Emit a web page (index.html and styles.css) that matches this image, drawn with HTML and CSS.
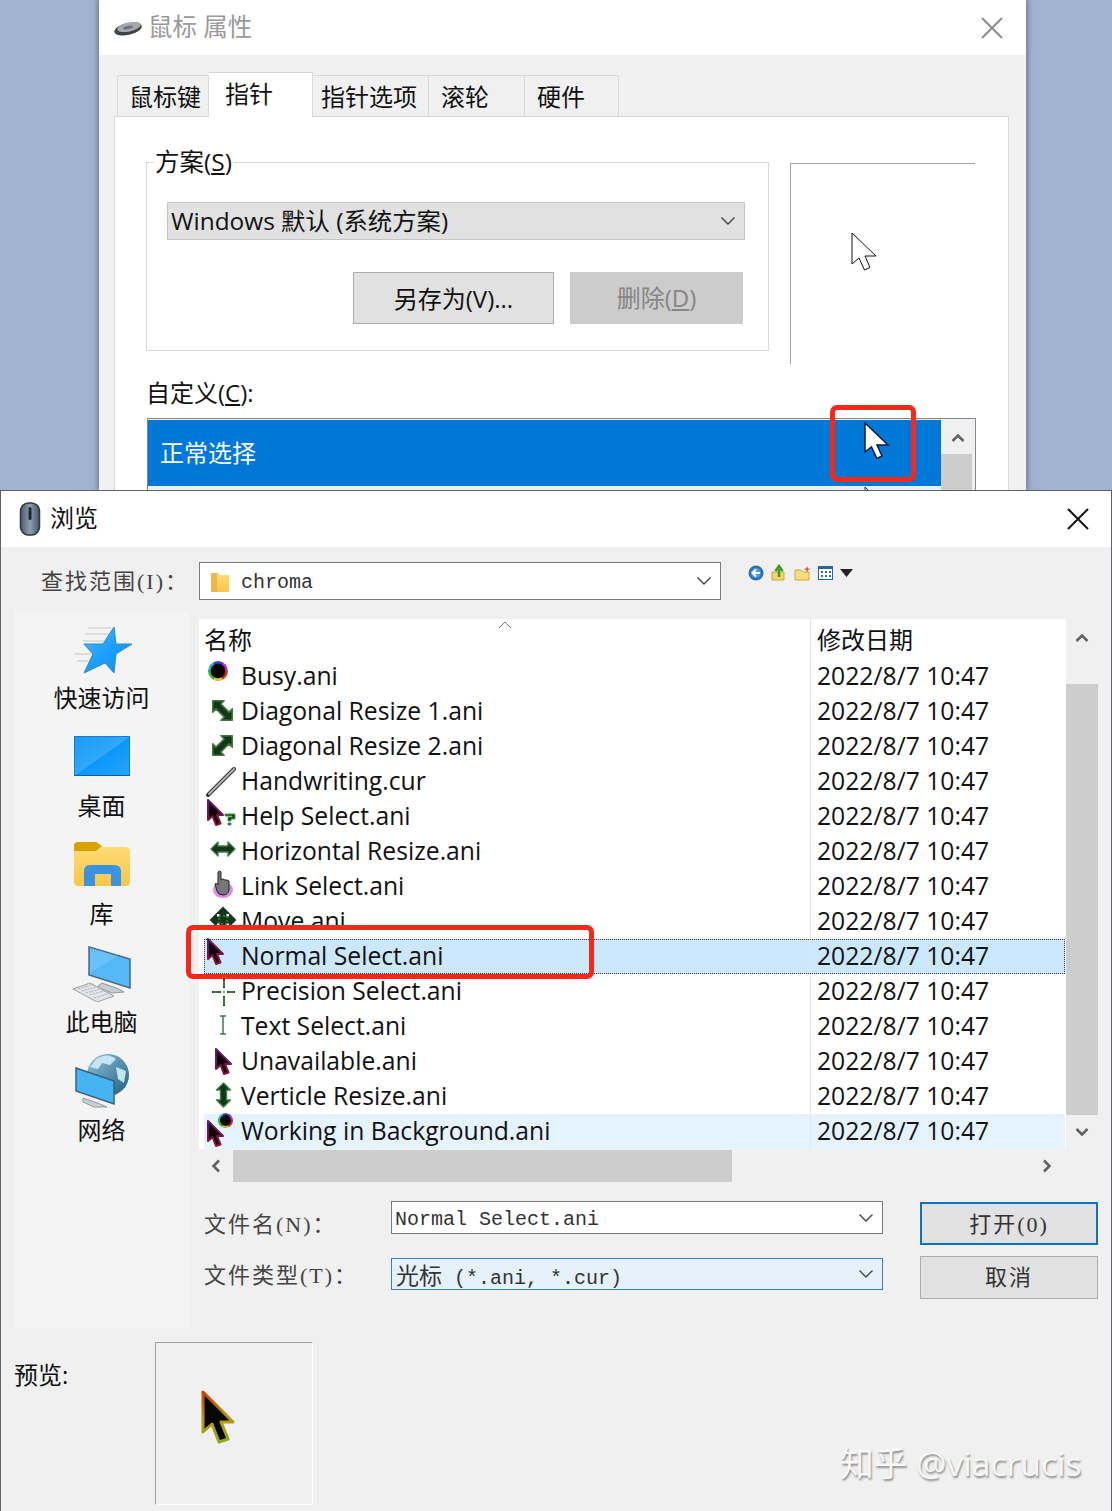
FILE: index.html
```html
<!DOCTYPE html>
<html lang="zh-CN">
<head>
    <meta charset="UTF-8">
    <title>鼠标属性 - 浏览</title>
    <link rel="stylesheet" href="styles.css">
</head>
<body>

<svg class="defs" width="0" height="0">
    <defs>
        <linearGradient id="crs" x1="0" y1="0" x2="0" y2="1">
            <stop offset="0" stop-color="#5b1a78"/>
            <stop offset="1" stop-color="#8c1030"/>
        </linearGradient>
        <linearGradient id="crsPreview" x1="0" y1="0" x2="0" y2="1">
            <stop offset="0" stop-color="#c2410c"/>
            <stop offset="0.55" stop-color="#b89a10"/>
            <stop offset="1" stop-color="#8cab14"/>
        </linearGradient>
        <linearGradient id="blueFill" x1="0" y1="0" x2="1" y2="1">
            <stop offset="0" stop-color="#4dbbfc"/>
            <stop offset="0.5" stop-color="#1d9ff9"/>
            <stop offset="1" stop-color="#0f90f0"/>
        </linearGradient>
        <linearGradient id="deskFill" x1="0" y1="0" x2="1" y2="1">
            <stop offset="0" stop-color="#1b9af5"/>
            <stop offset="0.5" stop-color="#2fa8f9"/>
            <stop offset="0.51" stop-color="#0b98fb"/>
            <stop offset="1" stop-color="#28a4f8"/>
        </linearGradient>
        <linearGradient id="folderFill" x1="0" y1="0" x2="0" y2="1">
            <stop offset="0" stop-color="#fedd7c"/>
            <stop offset="1" stop-color="#f8c648"/>
        </linearGradient>
        <linearGradient id="mouseFill" x1="0" y1="0" x2="1" y2="0">
            <stop offset="0" stop-color="#4a5a6e"/>
            <stop offset="0.5" stop-color="#8f9db0"/>
            <stop offset="1" stop-color="#44546a"/>
        </linearGradient>
        <linearGradient id="globeFill" x1="0" y1="0" x2="1" y2="1">
            <stop offset="0" stop-color="#8fc3dc"/>
            <stop offset="1" stop-color="#20607f"/>
        </linearGradient>
        <path id="arrow" d="M1 1V21L5.5 17L9 26L13.5 24.5L10 16H16Z" fill="#12040a" stroke="url(#crs)" stroke-width="2" stroke-linejoin="round"/>
        <path id="dbl" d="M-12 0L-5-7V-3H5V-7L12 0L5 7V3H-5V7Z" fill="#15361a" stroke="#3d7d3f" stroke-width="1.4" stroke-linejoin="round"/>
        <g id="ring">
            <circle cx="10" cy="10" r="9.5" fill="#050505"/>
            <circle cx="10" cy="10" r="8.5" fill="none" stroke="#e02a2a" stroke-width="2.5" stroke-dasharray="8.9 44.5"/>
            <circle cx="10" cy="10" r="8.5" fill="none" stroke="#e6c81e" stroke-width="2.5" stroke-dasharray="8.9 44.5" stroke-dashoffset="-8.9"/>
            <circle cx="10" cy="10" r="8.5" fill="none" stroke="#2fc02f" stroke-width="2.5" stroke-dasharray="8.9 44.5" stroke-dashoffset="-17.8"/>
            <circle cx="10" cy="10" r="8.5" fill="none" stroke="#22b6c8" stroke-width="2.5" stroke-dasharray="8.9 44.5" stroke-dashoffset="-26.7"/>
            <circle cx="10" cy="10" r="8.5" fill="none" stroke="#3040d8" stroke-width="2.5" stroke-dasharray="8.9 44.5" stroke-dashoffset="-35.6"/>
            <circle cx="10" cy="10" r="8.5" fill="none" stroke="#c028c0" stroke-width="2.5" stroke-dasharray="8.9 44.5" stroke-dashoffset="-44.5"/>
        </g>
    </defs>
</svg>

<div class="desktop">

    <!-- 鼠标 属性 -->
    <div class="win win-props">
        <div class="props-title">
            <svg width="30" height="18" viewBox="0 0 30 18">
                <ellipse cx="15" cy="10" rx="14" ry="6" transform="rotate(-12 15 10)" fill="#3e4347"/>
                <ellipse cx="16" cy="8" rx="12" ry="4.5" transform="rotate(-12 16 8)" fill="#a3a9af"/>
                <ellipse cx="15" cy="8.5" rx="5" ry="1.6" transform="rotate(-12 15 8.5)" fill="#6c7278"/>
            </svg>
            <span class="props-name">鼠标 属性</span>
            <svg class="close close-dim" width="22" height="22" viewBox="0 0 22 22"><path d="M1 1L21 21M21 1L1 21"/></svg>
        </div>

        <div class="tabs">
            <div class="tab tab-keys">鼠标键</div>
            <div class="tab tab-active">指针</div>
            <div class="tab tab-opts">指针选项</div>
            <div class="tab tab-wheel">滚轮</div>
            <div class="tab tab-hw">硬件</div>
        </div>

        <div class="panel">
            <div class="panel-top">
                <fieldset class="scheme">
                    <legend>方案(<u>S</u>)</legend>
                    <div class="scheme-select">
                        <span>Windows 默认 (系统方案)</span>
                        <svg class="chev" width="16" height="10" viewBox="0 0 16 10"><path d="M1.5 1.5L8 8L14.5 1.5"/></svg>
                    </div>
                    <div class="scheme-btns">
                        <div class="sbtn sbtn-save">另存为(V)...</div>
                        <div class="sbtn sbtn-del">删除(<u>D</u>)</div>
                    </div>
                </fieldset>
                <div class="cursor-preview">
                    <svg width="28" height="40" viewBox="0 0 28 40">
                        <path d="M1 1V32L8 26L13.5 38L19 35.5L14 24H25Z" fill="#fff" stroke="#111" stroke-width="1"/>
                    </svg>
                </div>
            </div>

            <div class="custom-label">自定义(<u>C</u>):</div>
            <div class="cursor-list">
                <div class="cursor-rows">
                    <div class="cursor-row">
                        <span>正常选择</span>
                        <svg width="26" height="38" viewBox="0 0 26 38">
                            <path d="M1 1V30L7.5 25L13 36.5L18 34L13 23H24Z" fill="#fff" stroke="#0b1b33" stroke-width="1.5"/>
                        </svg>
                    </div>
                    <svg class="cursor-tip" width="8" height="6" viewBox="0 0 8 6"><path d="M1 0V6M1 0L6 5" fill="none" stroke="#333"/></svg>
                </div>
                <div class="cursor-scroll">
                    <svg class="sarrow" width="14" height="10" viewBox="0 0 14 10"><path d="M1.5 8L7 2.5L12.5 8"/></svg>
                    <div class="cursor-thumb"></div>
                </div>
            </div>
        </div>

        <div class="redbox redbox-cursor"></div>
    </div>

    <!-- 浏览 -->
    <div class="win win-browse">
        <div class="browse-title">
            <svg width="22" height="34" viewBox="0 0 22 34">
                <rect x="1.5" y="1" width="19" height="32" rx="8" fill="url(#mouseFill)" stroke="#2d3540" stroke-width="1.5"/>
                <rect x="9.5" y="5" width="3" height="13" rx="1.5" fill="#20262d"/>
            </svg>
            <span class="browse-name">浏览</span>
            <svg class="close" width="22" height="22" viewBox="0 0 22 22"><path d="M1 1L21 21M21 1L1 21"/></svg>
        </div>

        <div class="lookin">
            <span class="lookin-label">查找范围(I)：</span>
            <div class="combo combo-path">
                <svg width="22" height="24" viewBox="0 0 22 24">
                    <path d="M2 4H9L11 6H20V23H2Z" fill="url(#folderFill)"/>
                    <path d="M2 4H8V23H2Z" fill="#e8b84a"/>
                </svg>
                <span class="combo-text">chroma</span>
                <svg class="chev" width="16" height="10" viewBox="0 0 16 10"><path d="M1.5 1.5L8 8L14.5 1.5"/></svg>
            </div>
            <div class="tools">
                <svg width="108" height="18" viewBox="0 0 108 18">
                    <circle cx="8" cy="9" r="7.5" fill="#2a6fb8"/>
                    <circle cx="8" cy="9" r="5" fill="#4d9be0"/>
                    <path d="M12 9H5M8 5.5L4.5 9L8 12.5" fill="none" stroke="#fff" stroke-width="2"/>
                    <path d="M24 8H36V16H24Z" fill="#f3d671" stroke="#c9a63c"/>
                    <path d="M31 13V5M27.5 7L31 2L34.5 7" fill="none" stroke="#3f9a25" stroke-width="2.5"/>
                    <path d="M47 6H53L55 8H61V16H47Z" fill="#f7dc82" stroke="#cfa946"/>
                    <path d="M59 2L60 4.5L62.5 5L60 6L59 8.5L58 6L55.5 5L58 4.5Z" fill="#e2572c"/>
                    <rect x="70.5" y="2.5" width="14" height="13" fill="#fff" stroke="#2364ad"/>
                    <path d="M70 2H85V5H70Z" fill="#2364ad"/>
                    <path d="M73 7h2v2h-2zM77 7h2v2h-2zM81 7h2v2h-2zM73 11h2v2h-2zM77 11h2v2h-2zM81 11h2v2h-2z" fill="#41648c"/>
                    <path d="M92 5H105L98.5 13Z" fill="#222"/>
                </svg>
            </div>
        </div>

        <div class="main">
            <div class="places">
                <div class="place">
                    <div class="place-icon icon-star">
                        <svg width="60" height="48" viewBox="0 0 60 48">
                            <path d="M16 2H39M13 8H37M11 15H34M2 28H19M5 35H16" stroke="#bcc8d0" stroke-width="1"/>
                            <path d="M42 1L44 18H60L44 28L42 47L33 37L12 47L21 28L12 18H31Z" fill="url(#blueFill)" stroke="#2d8ad0" stroke-linejoin="round"/>
                        </svg>
                    </div>
                    <span>快速访问</span>
                </div>
                <div class="place">
                    <div class="place-icon icon-desk">
                        <svg width="56" height="40" viewBox="0 0 56 40">
                            <rect x="0.5" y="0.5" width="55" height="39" fill="url(#deskFill)" stroke="#1480d0"/>
                            <path d="M0 39.5H56" stroke="#0b5f9e" stroke-width="1"/>
                        </svg>
                    </div>
                    <span>桌面</span>
                </div>
                <div class="place">
                    <div class="place-icon">
                        <svg width="56" height="46" viewBox="0 0 56 46">
                            <path d="M0 6Q0 1 4 1H22L28 6H50Q56 6 56 10V40Q56 45 52 45H4Q0 45 0 40Z" fill="url(#folderFill)"/>
                            <path d="M0 10V5Q0 1 4 1H22L28 5L22 10Z" fill="#d9a000"/>
                            <path d="M10 45V30Q10 24 16 24H40Q47 24 47 30V45H37V33H21V45Z" fill="#3a93df"/>
                        </svg>
                    </div>
                    <span>库</span>
                </div>
                <div class="place">
                    <div class="place-icon icon-pc">
                        <svg width="60" height="56" viewBox="0 0 60 56">
                            <path d="M17 1L58 13V42L17 29Z" fill="#56b8f7" stroke="#466a85" stroke-width="1.5"/>
                            <path d="M18 2L46 10L18 27Z" fill="#7accfb" opacity="0.5"/>
                            <path d="M30 37L47 43L52 46L40 47L25 41Z" fill="#c6cdd2" stroke="#8d979e"/>
                            <path d="M1 43L18 37L42 50L25 56Z" fill="#e2e5e8" stroke="#9aa3a9"/>
                            <path d="M6 43L22 38M10 45L27 40M14 47L31 42M18 49L35 44M22 52L39 47" stroke="#a9b1b8" stroke-width="1" stroke-dasharray="2 1"/>
                        </svg>
                    </div>
                    <span>此电脑</span>
                </div>
                <div class="place">
                    <div class="place-icon icon-net">
                        <svg width="56" height="56" viewBox="0 0 56 56">
                            <circle cx="34" cy="23" r="21" fill="url(#globeFill)"/>
                            <path d="M22 7Q34 0 42 7L36 13L28 11L24 17L16 15Z M42 15L52 19L50 31L44 27Z" fill="#c6e5f2"/>
                            <path d="M2 16L40 29V52L2 39Z" fill="#46b4f4" stroke="#3d6178" stroke-width="1.5"/>
                            <path d="M9 46L26 52L33 55L20 55L9 50Z" fill="#c8ced2" stroke="#949ca2"/>
                        </svg>
                    </div>
                    <span>网络</span>
                </div>
            </div>

            <div class="right">
                <div class="fileview">
                    <div class="list">
                        <div class="list-head">
                            <span class="col-name">名称</span>
                            <svg class="sort" width="14" height="8" viewBox="0 0 14 8"><path d="M1 7L7 1L13 7"/></svg>
                            <span class="col-date">修改日期</span>
                        </div>

                        <div class="row">
                            <span class="name"><svg class="ico" width="36" height="35" viewBox="0 0 36 35"><use href="#ring" x="4" y="2"/></svg>Busy.ani</span>
                            <span class="date">2022/8/7 10:47</span>
                        </div>
                        <div class="row">
                            <span class="name"><svg class="ico" width="36" height="35" viewBox="0 0 36 35"><use href="#dbl" transform="translate(18.5 16.5) rotate(45) scale(1.15)"/></svg>Diagonal Resize 1.ani</span>
                            <span class="date">2022/8/7 10:47</span>
                        </div>
                        <div class="row">
                            <span class="name"><svg class="ico" width="36" height="35" viewBox="0 0 36 35"><use href="#dbl" transform="translate(18.5 16.5) rotate(-45) scale(1.15)"/></svg>Diagonal Resize 2.ani</span>
                            <span class="date">2022/8/7 10:47</span>
                        </div>
                        <div class="row">
                            <span class="name"><svg class="ico" width="36" height="35" viewBox="0 0 36 35"><path d="M4 31L30 5" stroke="#333" stroke-width="4" stroke-linecap="round"/><path d="M5 30L30 5" stroke="#b4b4b4" stroke-width="2" stroke-linecap="round"/></svg>Handwriting.cur</span>
                            <span class="date">2022/8/7 10:47</span>
                        </div>
                        <div class="row">
                            <span class="name"><svg class="ico" width="36" height="35" viewBox="0 0 36 35"><use href="#arrow" x="3" y="0"/><path d="M21 15H31V20H27V22H24V18H28V17H21Z" fill="#15361a" stroke="#4ea64e"/><path d="M24 24H27V26H24Z" fill="#15361a" stroke="#4ea64e"/></svg>Help Select.ani</span>
                            <span class="date">2022/8/7 10:47</span>
                        </div>
                        <div class="row">
                            <span class="name"><svg class="ico" width="36" height="35" viewBox="0 0 36 35"><use href="#dbl" transform="translate(19 15)"/></svg>Horizontal Resize.ani</span>
                            <span class="date">2022/8/7 10:47</span>
                        </div>
                        <div class="row">
                            <span class="name"><svg class="ico" width="36" height="35" viewBox="0 0 36 35"><ellipse cx="19" cy="21" rx="10" ry="8" fill="#d070e0" opacity="0.8"/><path d="M14 3Q16 1 17 3V11L19 10L21 11L23 11L25 12V21Q24 26 19 26Q14 26 13 22L11 15Q12 13 14 16Z" fill="#777" stroke="#222"/></svg>Link Select.ani</span>
                            <span class="date">2022/8/7 10:47</span>
                        </div>
                        <div class="row">
                            <span class="name name-cut"><svg class="ico" width="36" height="35" viewBox="0 0 36 35"><path d="M19 4L24 9H21.5V13.5H26V11L31 16L26 21V18.5H21.5V23H24L19 28L14 23H16.5V18.5H12V21L7 16L12 11V13.5H16.5V9H14Z" fill="#15361a" stroke="#15361a" stroke-width="2"/><path d="M15 12H23V20H15Z" fill="none" stroke="#4ea64e" stroke-dasharray="2 2"/></svg>Move.ani</span>
                            <span class="date">2022/8/7 10:47</span>
                        </div>
                        <div class="row row-sel">
                            <span class="name"><svg class="ico" width="36" height="35" viewBox="0 0 36 35"><use href="#arrow" x="3" y="-1"/></svg>Normal Select.ani</span>
                            <span class="date">2022/8/7 10:47</span>
                        </div>
                        <div class="row">
                            <span class="name"><svg class="ico" width="36" height="35" viewBox="0 0 36 35"><path d="M20 5V14M20 22V32M8 18H17M23 18H31" stroke="#1e3a20" stroke-width="2"/><path d="M20 6V13M20 23V31M9 18H16M24 18H30" stroke="#58b858" stroke-width="1"/><rect x="19" y="17" width="2" height="2" fill="#58b858"/></svg>Precision Select.ani</span>
                            <span class="date">2022/8/7 10:47</span>
                        </div>
                        <div class="row">
                            <span class="name"><svg class="ico" width="36" height="35" viewBox="0 0 36 35"><path d="M16 7H22M19 7V25M16 25H22" fill="none" stroke="#3d7d3f" stroke-width="1.5"/></svg>Text Select.ani</span>
                            <span class="date">2022/8/7 10:47</span>
                        </div>
                        <div class="row">
                            <span class="name"><svg class="ico" width="36" height="35" viewBox="0 0 36 35"><use href="#arrow" x="11" y="4"/></svg>Unavailable.ani</span>
                            <span class="date">2022/8/7 10:47</span>
                        </div>
                        <div class="row">
                            <span class="name"><svg class="ico" width="36" height="35" viewBox="0 0 36 35"><use href="#dbl" transform="translate(19.5 16) rotate(90)"/></svg>Verticle Resize.ani</span>
                            <span class="date">2022/8/7 10:47</span>
                        </div>
                        <div class="row row-hot">
                            <span class="name"><svg class="ico" width="36" height="35" viewBox="0 0 36 35"><use href="#arrow" x="3" y="6"/><use href="#ring" transform="translate(14 -1) scale(0.75)"/></svg>Working in Background.ani</span>
                            <span class="date">2022/8/7 10:47</span>
                        </div>
                    </div>
                    <div class="vscroll">
                        <svg class="sarrow" width="14" height="10" viewBox="0 0 14 10"><path d="M1.5 8L7 2.5L12.5 8"/></svg>
                        <div class="vthumb"></div>
                        <svg class="sarrow" width="14" height="10" viewBox="0 0 14 10"><path d="M1.5 2L7 7.5L12.5 2"/></svg>
                    </div>
                </div>

                <div class="hscroll">
                    <svg class="sarrow harrow-l" width="10" height="14" viewBox="0 0 10 14"><path d="M8 1.5L2.5 7L8 12.5"/></svg>
                    <div class="hthumb"></div>
                    <svg class="sarrow harrow-r" width="10" height="14" viewBox="0 0 10 14"><path d="M2 1.5L7.5 7L2 12.5"/></svg>
                </div>

                <div class="form">
                    <div class="fields">
                        <div class="field field-name">
                            <label>文件名(N)：</label>
                            <div class="combo combo-file">
                                <span class="combo-text">Normal Select.ani</span>
                                <svg class="chev" width="16" height="10" viewBox="0 0 16 10"><path d="M1.5 1.5L8 8L14.5 1.5"/></svg>
                            </div>
                        </div>
                        <div class="field field-type">
                            <label>文件类型(T)：</label>
                            <div class="combo combo-file combo-focus">
                                <span class="combo-text"><span class="combo-cjk">光标</span> (*.ani, *.cur)</span>
                                <svg class="chev" width="16" height="10" viewBox="0 0 16 10"><path d="M1.5 1.5L8 8L14.5 1.5"/></svg>
                            </div>
                        </div>
                    </div>
                    <div class="actions">
                        <div class="act act-open">打开(0)</div>
                        <div class="act">取消</div>
                    </div>
                </div>
            </div>
        </div>

        <div class="preview-row">
            <div class="preview-label">预览:</div>
            <div class="preview-box">
                <svg width="36" height="54" viewBox="0 0 18 27">
                    <path d="M1 1V21L5.5 17L9 26L13.5 24.5L10 16H16Z" fill="#060606" stroke="url(#crsPreview)" stroke-width="1.5" stroke-linejoin="round"/>
                </svg>
            </div>
        </div>

        <div class="redbox redbox-file"></div>
    </div>

    <div class="watermark">知乎 @viacrucis</div>
</div>

</body>
</html>
```

FILE: styles.css
```css
* {
    box-sizing: border-box;
}
body {
    margin: 0;
    font-family: "Open Sans", "Noto Sans CJK SC", sans-serif;
    font-size: 24px;
    color: #111;
    background: #a0b4d2;
}
.defs {
    position: absolute;
}
.desktop {
    position: relative;
    width: 1112px;
    height: 1511px;
    overflow: hidden;
}
.win {
    position: absolute;
    background: #f0f0f0;
}
svg {
    display: block;
    flex: none;
}

/* back window */
.win-props {
    left: 99px;
    top: 0;
    width: 927px;
    height: 490px;
    box-shadow: 0 0 6px 1px rgba(50, 60, 80, 0.6);
}
.props-title {
    display: flex;
    align-items: center;
    height: 55px;
    padding: 0 23px 0 14px;
    background: #fff;
}
.props-name {
    margin-left: 5px;
    padding-bottom: 4px;
    font-size: 24.5px;
    color: #9a9a9a;
}
.close {
    margin-left: auto;
    fill: none;
    stroke: #111;
    stroke-width: 2;
}
.close-dim {
    stroke: #8c8c8c;
}
.tabs {
    display: flex;
    align-items: flex-end;
    height: 44px;
    margin-top: 17px;
    padding-left: 18px;
}
.tab {
    position: relative;
    height: 41px;
    line-height: 42px;
    background: #f0f0f0;
    border: 1px solid #d9d9d9;
    border-bottom: 0;
    border-left: 0;
    white-space: nowrap;
}
.tab-keys {
    width: 92px;
    padding-left: 11px;
    border-left: 1px solid #d9d9d9;
}
.tab-active {
    z-index: 1;
    width: 104px;
    height: 45px;
    margin-bottom: -1px;
    padding-left: 16px;
    background: #fff;
}
.tab-opts {
    width: 116px;
    padding-left: 8px;
}
.tab-wheel {
    width: 96px;
    padding-left: 12px;
}
.tab-hw {
    width: 94px;
    padding-left: 12px;
}
.panel {
    width: 895px;
    height: 400px;
    margin-left: 15px;
    padding-left: 31px;
    background: #fff;
    border: 1px solid #d9d9d9;
}
.panel-top {
    display: flex;
    align-items: flex-start;
}
.scheme {
    width: 623px;
    height: 204px;
    margin: 30px 0 0;
    padding: 25px 23px 0 20px;
    border: 1px solid #d9d9d9;
    min-width: 0;
}
.scheme legend {
    margin-left: -13px;
    padding: 0 1px;
    font-size: 24.5px;
    line-height: 30px;
}
.scheme-select {
    display: flex;
    align-items: center;
    justify-content: space-between;
    height: 38px;
    padding: 0 8px 0 3px;
    background: #e1e1e1;
    border: 1px solid #c4c4c4;
}
.scheme-select span {
    padding-bottom: 3px;
    font-size: 24.4px;
}
.chev {
    fill: none;
    stroke: #444;
    stroke-width: 1.4;
}
.scheme-btns {
    display: flex;
    justify-content: flex-end;
    gap: 16px;
    margin: 32px 2px 0 0;
}
.sbtn {
    height: 52px;
    line-height: 52px;
    text-align: center;
}
.sbtn-save {
    width: 201px;
    background: #e1e1e1;
    border: 1px solid #adadad;
}
.sbtn-del {
    width: 173px;
    color: #858585;
    background: #cccccc;
}
.cursor-preview {
    width: 185px;
    height: 201px;
    margin: 46px 0 0 21px;
    padding: 68px 0 0 60px;
    border-top: 1px solid #a0a0a0;
    border-left: 1px solid #a0a0a0;
}
.custom-label {
    margin-top: 14px;
    line-height: 30px;
}
.cursor-list {
    display: flex;
    width: 829px;
    height: 90px;
    margin: 10px 0 0 1px;
    border: 1px solid #828790;
    border-bottom: 0;
}
.cursor-rows {
    width: 793px;
    padding-top: 1px;
    background: #eaf0f7;
}
.cursor-row {
    display: flex;
    align-items: center;
    justify-content: space-between;
    height: 66px;
    margin-bottom: 1px;
    padding: 0 51px 0 12px;
    color: #fff;
    background: #0078d7;
}
.cursor-row span {
    padding-bottom: 4px;
}
.cursor-row svg {
    margin-bottom: 24px;
}
.cursor-tip {
    margin-left: 716px;
}
.cursor-scroll {
    flex: 1;
    background: #f0f0f0;
}
.sarrow {
    fill: none;
    stroke: #606060;
    stroke-width: 2.5;
}
.cursor-scroll .sarrow {
    margin: 14px auto 11px;
}
.cursor-thumb {
    height: 60px;
    margin-right: 3px;
    background: #cdcdcd;
}
.redbox {
    position: absolute;
    border: 5px solid #f5281a;
    border-radius: 7px;
}
.redbox-cursor {
    left: 731px;
    top: 405px;
    width: 86px;
    height: 77px;
}

/* browse dialog */
.win-browse {
    left: 0;
    top: 490px;
    width: 1112px;
    height: 1021px;
    border: 1px solid #5f6266;
    border-bottom: 0;
}
.browse-title {
    display: flex;
    align-items: center;
    height: 56px;
    padding: 0 22px 0 18px;
    background: #fff;
}
.browse-name {
    margin-left: 9px;
    padding-bottom: 6px;
}
.lookin {
    display: flex;
    align-items: center;
    height: 38px;
    margin: 15px 0 0 40px;
}
.lookin-label {
    width: 158px;
    padding-bottom: 4px;
    font-family: "Liberation Serif", "Noto Sans CJK SC", serif;
    font-size: 22px;
    letter-spacing: 2px;
    color: #444;
    white-space: nowrap;
}
.combo {
    display: flex;
    align-items: center;
    background: #fff;
    border: 1px solid #7a7a7a;
}
.combo-text {
    padding-top: 3px;
    font-family: "Liberation Mono", "Noto Sans CJK SC", monospace;
    font-size: 20px;
    color: #333;
    white-space: pre;
}
.combo-cjk {
    font-size: 23px;
}
.combo .chev {
    margin-left: auto;
}
.combo-path {
    width: 522px;
    height: 38px;
    padding: 0 8px 0 9px;
}
.combo-path .combo-text {
    margin-left: 10px;
}
.tools {
    margin: -17px 0 0 27px;
}
.main {
    display: flex;
    margin: 11px 0 0 13px;
}
.places {
    width: 175px;
    height: 717px;
    padding-top: 14px;
    background: #f4f4f4;
}
.place {
    display: flex;
    flex-direction: column;
    align-items: center;
    height: 108px;
}
.place-icon {
    height: 56px;
}
.icon-star {
    margin-top: 1px;
    height: 55px;
}
.icon-desk {
    margin-top: 3px;
    height: 53px;
}
.icon-pc {
    margin-top: -3px;
    height: 59px;
}
.icon-net {
    margin-top: -5px;
    height: 61px;
}
.place span {
    height: 34px;
    line-height: 34px;
}
.right {
    width: 899px;
    margin-left: 10px;
    padding-top: 8px;
}
.fileview {
    display: flex;
    height: 530px;
}
.list {
    width: 867px;
    background: #fff;
}
.list-head {
    position: relative;
    display: flex;
    height: 40px;
    padding-left: 5px;
    line-height: 42px;
}
.col-name {
    width: 606px;
}
.col-date {
    padding-left: 6px;
    border-left: 1px solid #e5e5e5;
}
.sort {
    position: absolute;
    left: 299px;
    top: 2px;
    fill: none;
    stroke: #777;
}
.row {
    display: flex;
    width: 861px;
    height: 35px;
    margin-left: 5px;
    font-size: 24.7px;
    line-height: 33px;
}
.name {
    display: flex;
    width: 606px;
    white-space: nowrap;
}
.ico {
    width: 36px;
    margin-right: 1px;
    overflow: visible;
}
.name-cut {
    height: 26px;
    overflow: hidden;
}
.date {
    flex: 1;
    padding-left: 6px;
    border-left: 1px solid #e5e5e5;
}
.row-sel {
    background: #cce8ff;
    outline: 1px dotted #333;
    outline-offset: -1px;
}
.row-hot {
    background: #e5f3ff;
}
.vscroll {
    display: flex;
    flex: 1;
    flex-direction: column;
    align-items: center;
    padding-top: 14px;
}
.vthumb {
    width: 100%;
    height: 431px;
    margin: 41px 0 12px;
    background: #cdcdcd;
}
.hscroll {
    display: flex;
    align-items: center;
    width: 867px;
    height: 32px;
    margin-top: 1px;
}
.harrow-l {
    margin-left: 12px;
}
.hthumb {
    width: 499px;
    height: 100%;
    margin-left: 12px;
    background: #cdcdcd;
}
.harrow-r {
    margin-left: 310px;
}
.form {
    display: flex;
    margin-top: 19px;
}
.fields {
    width: 684px;
    margin-left: 5px;
}
.field {
    display: flex;
    align-items: flex-start;
    height: 57px;
}
.field label {
    width: 187px;
    font-family: "Liberation Serif", "Noto Sans CJK SC", serif;
    font-size: 22px;
    letter-spacing: 2px;
    color: #444;
    white-space: nowrap;
}
.field-name label {
    line-height: 48px;
}
.field-type label {
    line-height: 36px;
}
.combo-file {
    width: 492px;
    height: 33px;
    padding: 0 8px 0 3px;
}
.combo-focus {
    height: 32px;
    padding-left: 4px;
    background: #e5f1fb;
    border-color: #3a7fb5;
}
.combo-focus .combo-text {
    padding-top: 0;
}
.actions {
    display: flex;
    flex-direction: column;
    gap: 11px;
    width: 178px;
    margin: 1px 0 0 32px;
}
.act {
    height: 43px;
    line-height: 41px;
    text-align: center;
    font-family: "Liberation Serif", "Noto Sans CJK SC", serif;
    font-size: 22px;
    letter-spacing: 2px;
    color: #333;
    background: #e1e1e1;
    border: 1px solid #adadad;
}
.act-open {
    border: 2px solid #0f72c0;
}
.preview-row {
    display: flex;
    margin: 14px 0 0 13px;
}
.preview-label {
    width: 141px;
    padding-top: 18px;
    line-height: 30px;
}
.preview-box {
    width: 158px;
    height: 163px;
    padding: 47px 0 0 45px;
    border: 1px solid #fff;
    border-top-color: #a0a0a0;
    border-left-color: #a0a0a0;
}
.redbox-file {
    left: 185px;
    top: 434px;
    width: 408px;
    height: 54px;
}
.watermark {
    position: absolute;
    left: 840px;
    top: 1438px;
    font-size: 33.7px;
    line-height: 50px;
    color: #f7f7f7;
    text-shadow: 1px 2px 2px #8e8e8e;
    white-space: nowrap;
}
```
